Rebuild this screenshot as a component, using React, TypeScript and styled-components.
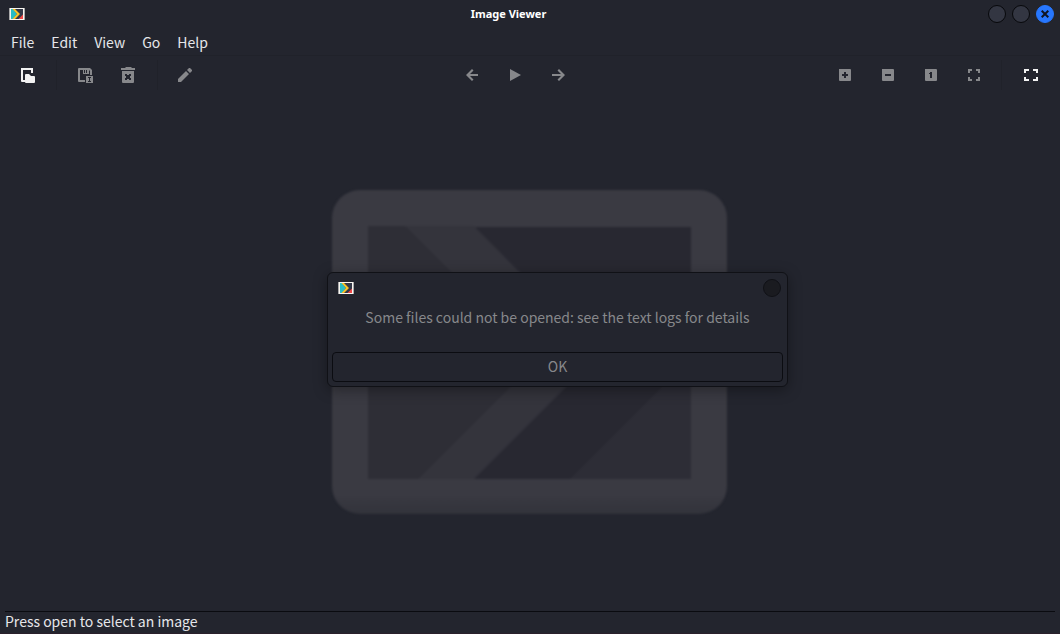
import React from "react";
import styled, { createGlobalStyle } from "styled-components";

const GlobalStyle = createGlobalStyle`
  * { box-sizing: border-box; }
  body {
    margin: 0;
    background: #23252e;
    color: #e6e7ea;
    font: 14px/18px "Noto Sans CJK SC", "Noto Sans", sans-serif;
  }
  button { font: inherit; color: inherit; background: none; border: 0; padding: 0; margin: 0; }
`;

const Window = styled.div`
  display: flex;
  flex-direction: column;
  min-height: 100vh;
  border-bottom: 1px solid #2a202b;
`;

const TitleBar = styled.header`
  display: flex;
  align-items: center;
  height: 28px;
  padding: 0 6px 0 9px;
`;

const Title = styled.h1`
  flex: 1;
  margin: 0;
  padding-left: 4px;
  text-align: center;
  font-family: "Noto Sans", sans-serif;
  font-size: 11px;
  line-height: 16px;
  font-weight: 700;
  color: #ffffff;
`;

const WindowControls = styled.div`
  display: flex;
  gap: 6px;
`;

const RoundButton = styled.button<{ $tone: "plain" | "close" | "off" }>`
  display: grid;
  place-items: center;
  width: 18px;
  height: 18px;
  border-radius: 50%;
  border: 1px solid ${(p) => (p.$tone === "close" ? "#2777ff" : p.$tone === "off" ? "#101116" : "#07080b")};
  background: ${(p) => (p.$tone === "close" ? "#2777ff" : p.$tone === "off" ? "#1a1b20" : "#333642")};
`;

const MenuBar = styled.nav`
  display: flex;
  align-items: center;
  height: 28px;
  padding: 0 2px;
  border-bottom: 1px solid #20222a;
`;

const MenuItem = styled.button`
  padding: 0 8px 0 9px;
`;

const ToolBar = styled.div`
  display: flex;
  justify-content: space-between;
  height: 38px;
  padding: 0 8px 0 6px;
`;

const ToolGroup = styled.div`
  display: flex;
  align-items: center;
`;

const ToolButton = styled.button<{ $active?: boolean }>`
  display: grid;
  place-items: center;
  width: 43px;
  height: 38px;
  color: ${(p) => (p.$active ? "#f2f2f2" : "#87888b")};
`;

const Separator = styled.span`
  width: 1px;
  height: 30px;
  margin: 0 7px;
  background: #20222a;
`;

const Canvas = styled.main`
  position: relative;
  flex: 1;
  display: grid;
  place-items: center;
`;

const StatusBar = styled.footer`
  margin: 0 5px;
  padding-bottom: 3px;
  border-top: 1px solid #0a0b10;
`;

const Dialog = styled.section`
  position: absolute;
  left: calc(50% - 203px);
  top: calc(50% - 81px);
  width: 461px;
  padding: 0 4px 4px;
  border: 1px solid #101116;
  border-radius: 6px;
  background: #23252e;
  color: #87888b;
  box-shadow: 0 3px 14px rgba(0, 0, 0, 0.35);
`;

const DialogHeader = styled.div`
  display: flex;
  align-items: center;
  justify-content: space-between;
  height: 30px;
  padding: 0 2px 0 6px;
`;

const Message = styled.p`
  margin: 5px 0 26px;
  text-align: center;
`;

const OkButton = styled.button`
  display: block;
  width: 100%;
  height: 30px;
  padding-bottom: 2px;
  border: 1px solid #0b0c11;
  border-radius: 4px;
`;

const AppIcon = () => (
  <svg width="16" height="12" viewBox="0 0 16 12" aria-hidden="true">
    <path fill="#a9a9aa" d="M0 0h16v12H0z" />
    <path fill="#f9f6f1" d="M1 0h14v12H1z" />
    <path fill="#333847" d="M2 1h12v10H2z" />
    <path fill="#28bcc4" d="M2 1h2l4 5-4 5H2z" />
    <path fill="#fbc224" d="M3.500 1H6l5 5-5 5H3.500l4.500-5z" />
    <path fill="#f04848" d="M14 6.500V11H9.500z" />
  </svg>
);

type GlyphProps = { d: string };
const Glyph = ({ d }: GlyphProps) => (
  <svg width="17" height="17" viewBox="0 0 17 17" fill="currentColor" fillRule="evenodd" aria-hidden="true">
    <path d={d} />
  </svg>
);

const icons = {
  open: "M2 1H14V6H12V3H4V13H6V15H3Q2 15 2 14ZM6 8Q6 7 7 7H10L12 9H15Q16 9 16 10V15Q16 16 15 16H7Q6 16 6 15Z",
  saveAs: "M2 1H13L15 3V8H13V4L12 3V7H6V3H3V13H8V15H2Q1 15 1 14V2Q1 1 2 1ZM7 3V6H8V3ZM9 3V6H10V3ZM9 9H16V16H9ZM11 10V11H12V14H11V15H14V14H13V11H14V10Z",
  trash: "M1 1H5L6 0H11L12 1H15V3H1ZM2 4H14V15Q14 16 13 16H3Q2 16 2 15ZM5 7V9H6V11H5V13H7V12H9V13H11V11H10V9H11V7H9V8H7V7Z",
  edit: "M0 12L8 4L11 7L3 15H0ZM9 3L11 1H12L14 3V4L12 6Z",
  back: "M8 2L9.500 3.500L6 7H14V9H6L9.500 12.500L8 14L2 8Z",
  play: "M3 2L14 8L3 14Z",
  forward: "M9 2L7.500 3.500L11 7H2V9H11L7.500 12.500L9 14L15 8Z",
  zoomIn: "M4 2H15Q16 2 16 3V13Q16 14 15 14H5Q4 14 4 13ZM9 5V7H7V9H9V11H11V9H13V7H11V5Z",
  zoomOut: "M4 2H15Q16 2 16 3V13Q16 14 15 14H5Q4 14 4 13ZM7 7V9H13V7Z",
  original: "M4 2H15Q16 2 16 3V13Q16 14 15 14H5Q4 14 4 13ZM9 5V6H8V7H9V11H11V5Z",
  fit: "M4 2H8V4H6V6H4ZM12 2H16V6H14V4H12ZM4 10H6V12H8V14H4ZM14 10H16V14H12V12H14Z",
  fullscreen: "M2 2H7V4H4V6H2ZM11 2H16V6H14V4H11ZM2 10H4V12H7V14H2ZM14 10H16V14H11V12H14Z",
};

type ToolProps = { label: string; icon: keyof typeof icons; active?: boolean };
const Tool = ({ label, icon, active }: ToolProps) => (
  <ToolButton type="button" aria-label={label} $active={active}>
    <Glyph d={icons[icon]} />
  </ToolButton>
);

const WatermarkArt = styled.svg`
  overflow: visible;
`;

const Watermark = () => (
  <WatermarkArt width="396" height="324" viewBox="0 0 396 324" aria-hidden="true">
    <defs>
      <filter id="soft" x="-5%" y="-5%" width="110%" height="110%" colorInterpolationFilters="sRGB">
        <feGaussianBlur stdDeviation="1" />
      </filter>
      <linearGradient id="frame" x1="0" y1="0" x2="0" y2="1">
        <stop offset="0.94" stopColor="#3a3a42" />
        <stop offset="1" stopColor="#32333b" />
      </linearGradient>
      <clipPath id="pane">
        <path d="M36 35H359V288H36Z" />
      </clipPath>
    </defs>
    <g filter="url(#soft)">
      <rect y="-1" width="395" height="324" rx="28" fill="url(#frame)" />
      <g clipPath="url(#pane)">
        <path fill="#282831" d="M36 36H359V288H36Z" />
        <path fill="#2e2e36" d="M36 35H73L206 168L86 288H36Z" />
        <path fill="#34343c" d="M73 35H142L268 162L142 288H86L206 168Z" />
        <path fill="#2d2d36" d="M238 288L359 167V288Z" />
      </g>
    </g>
  </WatermarkArt>
);

export default function App() {
  return (
    <>
      <GlobalStyle />
      <Window>
        <TitleBar>
          <AppIcon />
          <Title>Image Viewer</Title>
          <WindowControls>
            <RoundButton type="button" aria-label="Minimize" $tone="plain" />
            <RoundButton type="button" aria-label="Maximize" $tone="plain" />
            <RoundButton type="button" aria-label="Close" $tone="close">
              <svg width="8" height="8" viewBox="0 0 8 8" stroke="#101522" strokeWidth="2" aria-hidden="true">
                <path d="M.7 .7L7.300 7.300M7.300 .7L.7 7.300" />
              </svg>
            </RoundButton>
          </WindowControls>
        </TitleBar>
        <MenuBar>
          {["File", "Edit", "View", "Go", "Help"].map((name) => (
            <MenuItem type="button" key={name}>{name}</MenuItem>
          ))}
        </MenuBar>
        <ToolBar role="toolbar">
          <ToolGroup>
            <Tool label="Open" icon="open" active />
            <Separator />
            <Tool label="Save as" icon="saveAs" />
            <Tool label="Delete" icon="trash" />
            <Separator />
            <Tool label="Edit" icon="edit" />
          </ToolGroup>
          <ToolGroup>
            <Tool label="Previous" icon="back" />
            <Tool label="Play slideshow" icon="play" />
            <Tool label="Next" icon="forward" />
          </ToolGroup>
          <ToolGroup>
            <Tool label="Zoom in" icon="zoomIn" />
            <Tool label="Zoom out" icon="zoomOut" />
            <Tool label="Original size" icon="original" />
            <Tool label="Fit to window" icon="fit" />
            <Separator />
            <Tool label="Fullscreen" icon="fullscreen" active />
          </ToolGroup>
        </ToolBar>
        <Canvas>
          <Watermark />
          <Dialog role="alertdialog" aria-describedby="message">
            <DialogHeader>
              <AppIcon />
              <RoundButton type="button" aria-label="Close dialog" $tone="off" />
            </DialogHeader>
            <Message id="message">Some files could not be opened: see the text logs for details</Message>
            <OkButton type="button">OK</OkButton>
          </Dialog>
        </Canvas>
        <StatusBar>Press open to select an image</StatusBar>
      </Window>
    </>
  );
}
